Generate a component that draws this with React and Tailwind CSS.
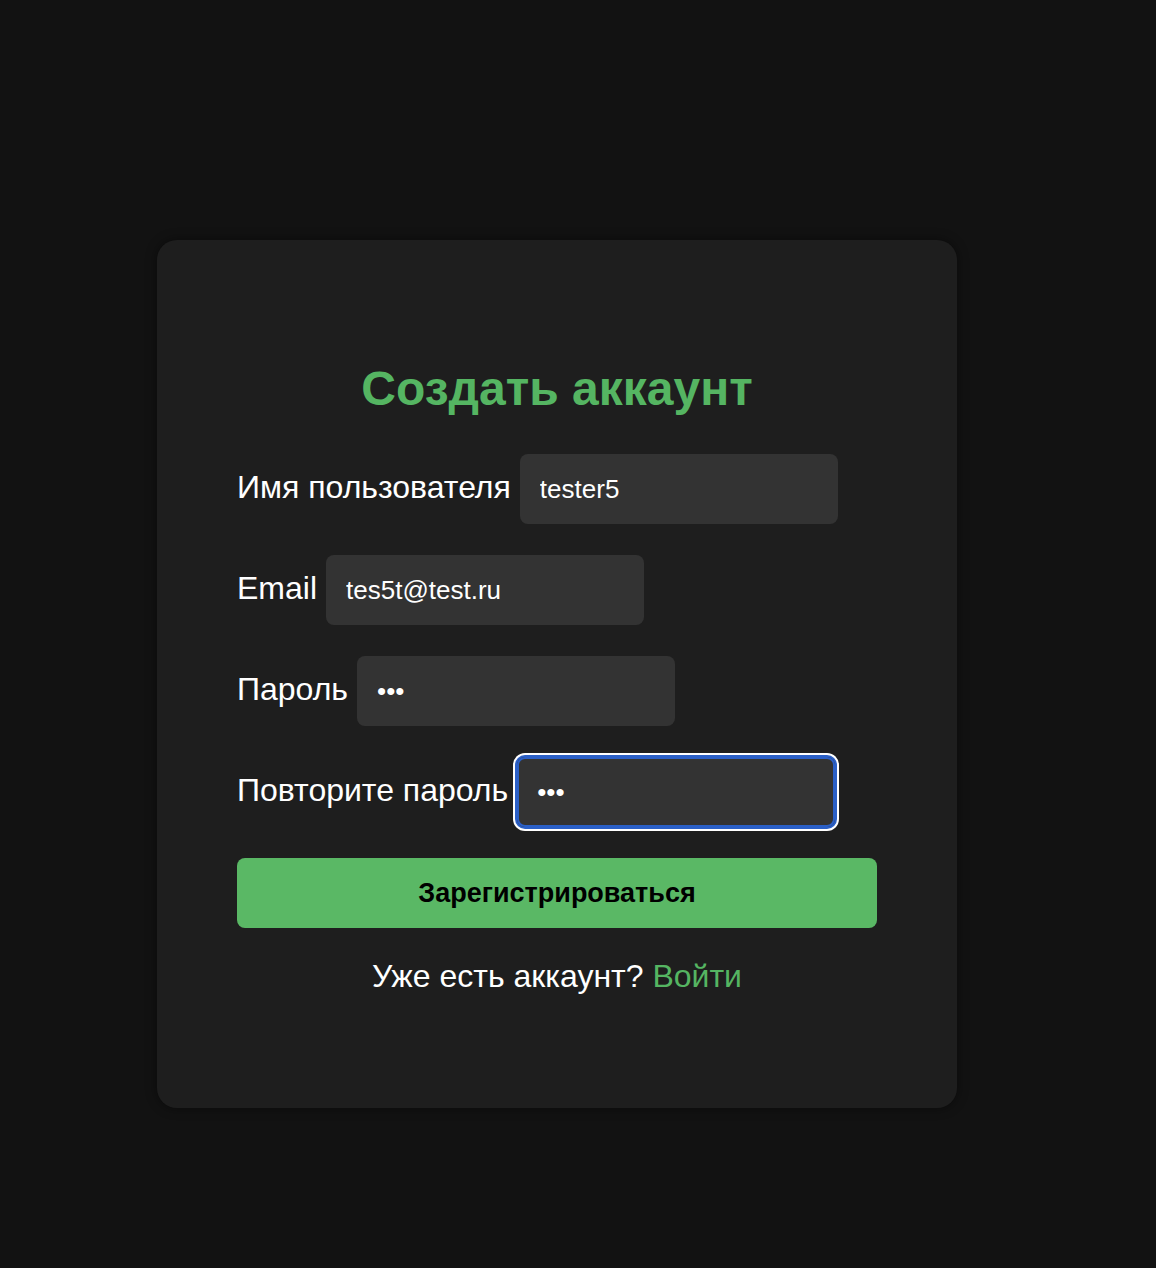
import React, { useState } from 'react';

const fields = [
  { id: 'username', label: 'Имя пользователя', type: 'text', value: 'tester5' },
  { id: 'email', label: 'Email', type: 'email', value: 'tes5t@test.ru' },
  { id: 'password', label: 'Пароль', type: 'password', value: '123' },
  { id: 'password2', label: 'Повторите пароль', type: 'password', value: '123', focused: true },
];

const Register = () => {
  const [form, setForm] = useState(
    Object.fromEntries(fields.map((f) => [f.id, f.value]))
  );

  const handleChange = (e) => {
    setForm({ ...form, [e.target.name]: e.target.value });
  };

  const handleSubmit = (e) => {
    e.preventDefault();
  };

  return (
    <div
      className="min-h-screen bg-[#121212] pt-[240px] pl-[157px] pb-[160px]"
      style={{ fontFamily: '"Liberation Sans", Arial, sans-serif' }}
    >
      <div className="w-[800px] bg-[#1e1e1e] rounded-[20px] p-[80px] shadow-[0_0_12px_rgba(0,0,0,0.45)]">
        <h2 className="mt-[41px] mb-[38px] text-center text-[48px] leading-[55px] font-bold text-[#55b562]">
          Создать аккаунт
        </h2>

        <form onSubmit={handleSubmit} className="flex flex-col gap-[31px]">
          {fields.map((f) => (
            <div key={f.id} className="flex items-center h-[70px]">
              <label htmlFor={f.id} className="text-white text-[32px] leading-[37px] mr-[9px] mb-[3px]">
                {f.label}
              </label>
              <input
                id={f.id}
                name={f.id}
                type={f.type}
                value={form[f.id]}
                onChange={handleChange}
                className={`w-[318px] h-[70px] shrink-0 rounded-[8px] bg-[#333333] text-white text-[26px] px-[20px] outline-none ${
                  f.focused
                    ? 'shadow-[inset_0_0_0_2px_#2a5fc7,0_0_0_2px_#2a5fc7,0_0_0_4px_#ffffff]'
                    : ''
                }`}
              />
            </div>
          ))}

          <button
            type="submit"
            className="w-full h-[70px] rounded-[8px] bg-[#5ab865] text-black text-[27px] font-bold"
          >
            Зарегистрироваться
          </button>
        </form>

        <p className="mt-[30px] mb-[33px] text-center text-white text-[32px] leading-[37px]">
          Уже есть аккаунт? <a href="#" className="text-[#55b562]">Войти</a>
        </p>
      </div>
    </div>
  );
};

export default function App() {
  return <Register />;
}
